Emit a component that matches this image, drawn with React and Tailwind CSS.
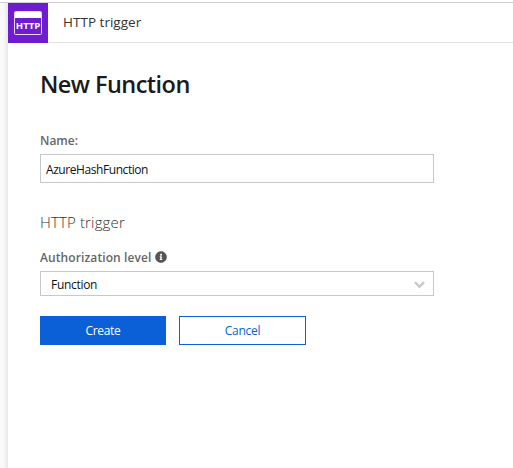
import React from "react";
import { FaInfoCircle } from "react-icons/fa";

function HttpIcon() {
  return (
    <svg width="40" height="40" viewBox="0 0 40 40" className="shrink-0 bg-[#6f1bd0]">
      <rect x="6.5" y="8.5" width="27" height="23" rx="1" fill="none" stroke="#e6d6f8" />
      <rect x="7" y="9" width="26" height="6" fill="#fff" />
      <text x="7.8" y="26" textLength="24.6" lengthAdjust="spacingAndGlyphs" fill="#fff" className="font-['Open_Sans',sans-serif] text-[9.5px] font-bold">
        HTTP
      </text>
    </svg>
  );
}

function Header() {
  return (
    <header className="flex h-[41px] border-t border-[#d0d0d0] bg-white">
      <div className="w-2 shrink-0 bg-linear-to-r from-[#fafafa] from-40% to-[#e8e8e8]" />
      <HttpIcon />
      <div className="flex flex-1 items-center border-b border-[#e2e2e2] pl-[15px] text-[13.5px] tracking-[0.02px] text-[#333]">
        HTTP trigger
      </div>
    </header>
  );
}

export default function App() {
  return (
    <div className="flex h-[468px] w-[513px] flex-col overflow-hidden bg-white pt-[2px] font-['Open_Sans',sans-serif] whitespace-nowrap">
      <Header />
      <div className="flex flex-1">
        <div className="w-2 shrink-0 bg-linear-to-r from-[#fafafa] from-40% to-[#e8e8e8]" />
        <main className="flex flex-col pt-[25px] pl-8">
          <h1 className="h-8 text-[23.5px] leading-8 font-semibold tracking-[-0.55px] text-[#1b1b1b]">New Function</h1>
          <label className="mt-8 h-[18px] text-[12px] leading-[18px] font-semibold text-[#666]">Name:</label>
          <input
            defaultValue="AzureHashFunction"
            className="mt-1 h-[29px] w-[394px] border border-[#c8c8c8] bg-white px-[5px] pt-0.5 text-[12px] tracking-[-0.43px] text-[#111] outline-none"
          />
          <h2 className="mt-[29px] h-5 text-[15px] leading-5 font-light tracking-[0.15px] text-[#333]">HTTP trigger</h2>
          <div className="mt-[17px] flex h-[18px] items-center gap-1 text-[12px] leading-[18px] font-semibold tracking-[0.1px] text-[#666]">
            <span>Authorization level</span>
            <FaInfoCircle className="-mt-0.5 size-3 text-[#555]" />
          </div>
          <div className="mt-1 flex h-[25px] w-[394px] items-center justify-between border border-[#c8c8c8] pr-2 pl-[10px] text-[12px] text-[#111]">
            <span className="pt-0.5 tracking-[-0.3px]">Function</span>
            <svg width="11" height="8" viewBox="0 0 11 8" fill="none" stroke="#c8c8c8" strokeWidth="2.4" className="mt-0.5">
              <path d="M1 1.2 5.5 5.8 10 1.2" />
            </svg>
          </div>
          <div className="mt-5 flex gap-[13px] text-[12px] tracking-[-0.3px]">
            <button className="h-[29px] w-[126px] bg-[#0b5fd7] text-white">Create</button>
            <button className="h-[29px] w-[127px] border border-[#0b5fd7] bg-white text-[#0b5fd7]">Cancel</button>
          </div>
        </main>
      </div>
    </div>
  );
}
